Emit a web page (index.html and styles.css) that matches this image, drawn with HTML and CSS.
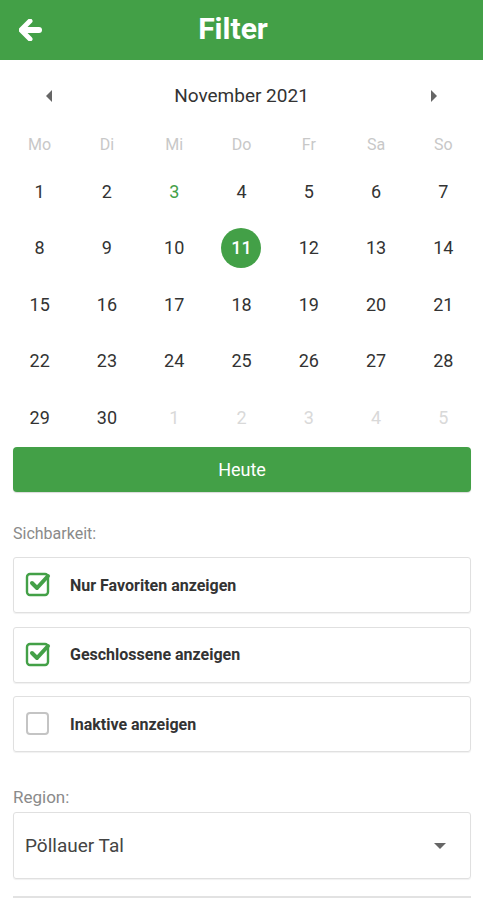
FILE: index.html
```html
<!DOCTYPE HTML>
<html>
    <head>
        <meta charset="UTF-8">
        <title>Filter</title>
        <link rel="stylesheet" href="styles.css">
    </head>
    <body>
        <div class="header">
            <a class="back">
                <svg width="23" height="22" viewBox="0 0 23 22"><path d="M11 2 L2 11 L11 20" fill="none" stroke="#fff" stroke-width="5" stroke-linecap="round" stroke-linejoin="round"/><path d="M4 11 H20" stroke="#fff" stroke-width="6" stroke-linecap="round"/></svg>
            </a>
            <h1>Filter</h1>
            <span></span>
        </div>

        <div class="cal">
            <div class="nav">
                <span class="tri left"></span>
                <span class="month">November 2021</span>
                <span class="tri right"></span>
            </div>
            <ul class="week">
                <li>Mo</li><li>Di</li><li>Mi</li><li>Do</li><li>Fr</li><li>Sa</li><li>So</li>
            </ul>
            <ul class="days">
                <li>1</li><li>2</li><li class="mark">3</li><li>4</li><li>5</li><li>6</li><li>7</li>
                <li>8</li><li>9</li><li>10</li><li><span class="sel">11</span></li><li>12</li><li>13</li><li>14</li>
                <li>15</li><li>16</li><li>17</li><li>18</li><li>19</li><li>20</li><li>21</li>
                <li>22</li><li>23</li><li>24</li><li>25</li><li>26</li><li>27</li><li>28</li>
                <li>29</li><li>30</li><li class="off">1</li><li class="off">2</li><li class="off">3</li><li class="off">4</li><li class="off">5</li>
            </ul>
        </div>

        <div class="content">
            <button class="today">Heute</button>

            <p class="label first">Sichbarkeit:</p>
            <div class="card">
                <svg class="box" width="28" height="28" viewBox="0 0 28 28"><rect x="2" y="4" width="21" height="21" rx="3" fill="none" stroke="#43a047" stroke-width="2.4"/><path d="M7 13 L12 18 L23 6" fill="none" stroke="#43a047" stroke-width="4" stroke-linecap="round" stroke-linejoin="round"/></svg>
                <span>Nur Favoriten anzeigen</span>
            </div>
            <div class="card">
                <svg class="box" width="28" height="28" viewBox="0 0 28 28"><rect x="2" y="4" width="21" height="21" rx="3" fill="none" stroke="#43a047" stroke-width="2.4"/><path d="M7 13 L12 18 L23 6" fill="none" stroke="#43a047" stroke-width="4" stroke-linecap="round" stroke-linejoin="round"/></svg>
                <span>Geschlossene anzeigen</span>
            </div>
            <div class="card">
                <svg class="box" width="28" height="28" viewBox="0 0 28 28"><rect x="2" y="4" width="21" height="21" rx="3" fill="none" stroke="#c4c4c4" stroke-width="2"/></svg>
                <span>Inaktive anzeigen</span>
            </div>

            <p class="label region">Region:</p>
            <div class="select">
                <span>Pöllauer Tal</span>
                <span class="caret"></span>
            </div>
            <div class="line"></div>
        </div>
    </body>
</html>
```

FILE: styles.css
```css
body{font-family: Roboto,"Liberation Sans",sans-serif;margin:0;color:#333;}
p,h1{margin:0;}
ul,li{margin:0;padding:0;list-style:none;}

.header{
    display: grid;
    grid-template-columns: 60px 1fr 77px;
    align-items: center;
    height: 60px;
    background: #43a047;
}
.header .back{
    display: flex;
    padding-left: 19px;
}
.header h1{
    padding-bottom: 3px;
    text-align: center;
    font-size: 30px;
    font-weight: 700;
    color: #fff;
}

.cal{
    padding: 0 6px;
}
.cal .nav{
    display: flex;
    align-items: center;
    justify-content: space-between;
    height: 72px;
    padding: 0 40px;
}
.cal .month{
    font-size: 19px;
    color: #333;
    padding-bottom: 1px;
}
.tri{
    width: 0;
    height: 0;
    border-top: 6px solid transparent;
    border-bottom: 6px solid transparent;
}
.tri.left{border-right: 6px solid #666;}
.tri.right{border-left: 6px solid #666;}

.week,.days{
    display: grid;
    grid-template-columns: repeat(7,1fr);
    text-align: center;
}
.week{
    height: 26px;
    line-height: 26px;
    font-size: 16px;
    color: #c8c8c8;
}
.days{
    grid-auto-rows: 56.5px;
    margin-top: 5px;
    font-size: 18px;
    color: #333;
}
.days li{
    display: flex;
    align-items: center;
    justify-content: center;
}
.days li.mark{color: #43a047;}
.days li.off{color: #d9d9d9;}
.days .sel{
    display: flex;
    align-items: center;
    justify-content: center;
    width: 40px;
    height: 40px;
    border-radius: 50%;
    background: #43a047;
    color: #fff;
    font-weight: 500;
}

.content{
    padding: 0 12px 0 13px;
}
.today{
    display: block;
    width: 100%;
    height: 45px;
    margin-top: 1.5px;
    border: none;
    border-radius: 4px;
    background: #43a047;
    color: #fff;
    font-family: Roboto,"Liberation Sans",sans-serif;
    font-size: 18px;
    font-weight: 400;
    box-shadow: 0 1px 1px rgba(0,0,0,.15);
}
.label{
    font-size: 16px;
    line-height: 20px;
    color: #8a8a8a;
}
.label.first{margin: 32px 0 13px;}
.label.region{margin: 35px 0 5px;font-size: 17px;}

.card{
    display: flex;
    align-items: center;
    height: 56px;
    box-sizing: border-box;
    margin-bottom: 13.5px;
    padding-left: 11px;
    border: 1px solid #e0e0e0;
    border-radius: 3px;
    box-shadow: 0 1px 1px rgba(0,0,0,.06);
}
.card .box{margin-top: -2px;}
.card span{
    margin-left: 17px;
    font-size: 16px;
    font-weight: 700;
    color: #333;
}

.select{
    display: flex;
    align-items: center;
    justify-content: space-between;
    height: 67px;
    box-sizing: border-box;
    padding: 0 24px 0 11px;
    border: 1px solid #e0e0e0;
    border-radius: 3px;
    box-shadow: 0 1px 1px rgba(0,0,0,.06);
    font-size: 19px;
    color: #444;
}
.caret{
    width: 0;
    height: 0;
    border-left: 6px solid transparent;
    border-right: 6px solid transparent;
    border-top: 6px solid #666;
}
.line{
    height: 2px;
    margin-top: 17px;
    background: #e2e2e2;
}
```
